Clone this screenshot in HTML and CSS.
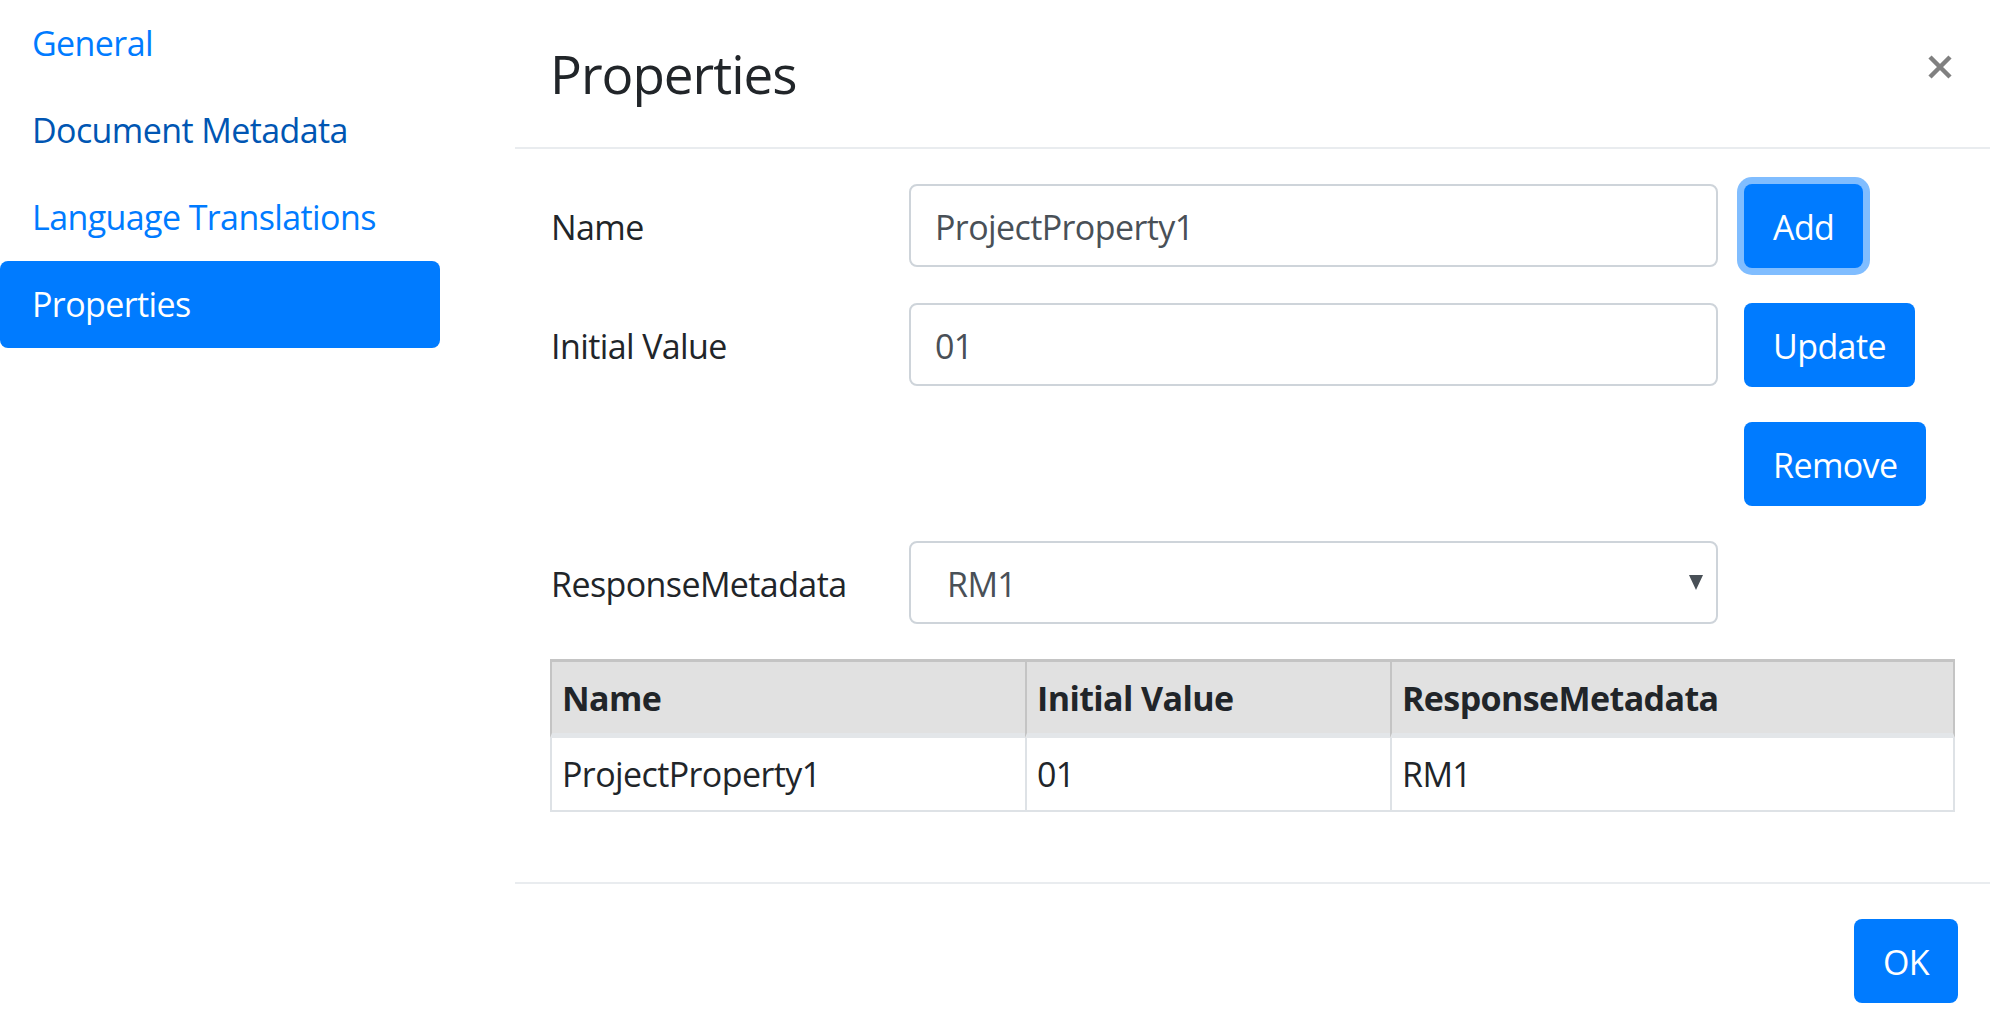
FILE: index.html
```html
<!DOCTYPE html>
<html lang="en">
<head>
    <meta charset="UTF-8">
    <meta name="viewport" content="width=device-width, initial-scale=1.0">
    <title>Properties</title>
    <link rel="stylesheet" href="styles.css">
</head>
<body>
    <div class="page">
        <nav class="side-nav">
            <a class="nav-link" href="#">General</a>
            <a class="nav-link hovered" href="#">Document Metadata</a>
            <a class="nav-link" href="#">Language Translations</a>
            <a class="nav-link active" href="#">Properties</a>
        </nav>

        <div class="dialog">
            <div class="dialog-header">
                <h4 class="dialog-title">Properties</h4>
                <button class="close" type="button" aria-label="Close">
                    <svg width="24" height="24" viewBox="0 0 24 24">
                        <path d="M2 2 L22 22 M22 2 L2 22" stroke="#808080" stroke-width="4.5" fill="none"/>
                    </svg>
                </button>
            </div>

            <div class="dialog-body">
                <div class="form-grid">
                    <label class="form-label">Name</label>
                    <input class="form-control" type="text" value="ProjectProperty1">
                    <button class="btn btn-focus" type="button">Add</button>

                    <label class="form-label">Initial Value</label>
                    <input class="form-control" type="text" value="01">
                    <button class="btn" type="button">Update</button>

                    <span></span>
                    <span></span>
                    <button class="btn" type="button">Remove</button>

                    <label class="form-label">ResponseMetadata</label>
                    <div class="select-wrap">
                        <select class="form-select">
                            <option>RM1</option>
                        </select>
                    </div>
                    <span></span>
                </div>

                <table class="prop-table">
                    <thead>
                        <tr>
                            <th class="col-name">Name</th>
                            <th class="col-value">Initial Value</th>
                            <th class="col-meta">ResponseMetadata</th>
                        </tr>
                    </thead>
                    <tbody>
                        <tr>
                            <td>ProjectProperty1</td>
                            <td>01</td>
                            <td>RM1</td>
                        </tr>
                    </tbody>
                </table>
            </div>

            <div class="dialog-footer">
                <button class="btn" type="button">OK</button>
            </div>
        </div>
    </div>
</body>
</html>
```

FILE: styles.css
```css
* {
    box-sizing: border-box;
}
body {
    margin: 0;
    background: #fff;
    color: #212529;
    font-family: "Open Sans", "Noto Sans", sans-serif;
    font-size: 34px;
    letter-spacing: -0.6px;
}
.page {
    display: flex;
    align-items: flex-start;
}

/* left navigation */
.side-nav {
    width: 440px;
    flex-shrink: 0;
    display: flex;
    flex-direction: column;
}
.nav-link {
    display: block;
    padding: 16px 32px;
    line-height: 55px;
    color: #007bff;
    text-decoration: none;
    border-radius: 8px;
}
.nav-link.hovered {
    color: #0056b3;
}
.nav-link.active {
    background: #007bff;
    color: #fff;
}

/* dialog */
.dialog {
    flex: 1;
    margin-left: 75px;
}
.dialog-header {
    display: flex;
    justify-content: space-between;
    align-items: flex-start;
    padding: 34px 38px 33px 35px;
    border-bottom: 2px solid #e9ecef;
}
.dialog-title {
    margin: 0;
    font-size: 53px;
    font-weight: 500;
    line-height: 80px;
    letter-spacing: -1px;
}
.close {
    margin-top: 21px;
    padding: 0;
    border: none;
    background: none;
    width: 24px;
    height: 24px;
}
.close svg {
    display: block;
}
.dialog-body {
    padding: 35px 35px 70px 35px;
}
.form-grid {
    display: grid;
    grid-template-columns: 333px 809px auto;
    grid-auto-rows: 83px;
    column-gap: 26px;
    row-gap: 36px;
    align-items: center;
}
.form-label {
    line-height: 80px;
    padding-top: 3px;
    padding-left: 1px;
}
.form-control,
.form-select {
    width: 809px;
    height: 83px;
    border: 2px solid #ced4da;
    border-radius: 8px;
    padding: 3px 24px 0 24px;
    font-family: inherit;
    font-size: 34px;
    letter-spacing: inherit;
    color: #495057;
    background: #fff;
    outline: none;
}
.select-wrap {
    position: relative;
    width: 809px;
}
.form-select {
    display: block;
    appearance: none;
    -webkit-appearance: none;
    padding-left: 36px;
}
.select-wrap::after {
    content: "";
    position: absolute;
    right: 15px;
    top: 34px;
    border-left: 7.5px solid transparent;
    border-right: 7.5px solid transparent;
    border-top: 15px solid #495057;
}
.btn {
    justify-self: start;
    height: 84px;
    padding: 2px 29px 0 29px;
    border: none;
    border-radius: 8px;
    background: #007bff;
    color: #fff;
    font-family: inherit;
    font-size: 34px;
    letter-spacing: inherit;
    cursor: pointer;
}
.btn-focus {
    box-shadow: 0 0 0 7px #80bdff;
}

/* table */
.prop-table {
    width: 100%;
    margin-top: 35px;
    border-collapse: separate;
    border-spacing: 0;
    table-layout: fixed;
}
.prop-table th,
.prop-table td {
    text-align: left;
    padding: 0 10px;
}
.prop-table th {
    height: 79px;
    line-height: 69px;
    padding-top: 2px;
    font-weight: 700;
    background: #e1e1e1;
    border-top: 3px solid #c4c4c4;
    border-left: 2px solid #c4c4c4;
    border-bottom: 5px solid #e3e6e9;
}
.prop-table th:last-child {
    border-right: 2px solid #c4c4c4;
}
.prop-table td {
    height: 74px;
    line-height: 72px;
    border-left: 2px solid #dee2e6;
    border-bottom: 2px solid #dee2e6;
}
.prop-table td:last-child {
    border-right: 2px solid #dee2e6;
}
.col-name {
    width: 475px;
}
.col-value {
    width: 365px;
}

.dialog-footer {
    display: flex;
    justify-content: flex-end;
    padding: 35px 32px 20px 35px;
    border-top: 2px solid #e9ecef;
}
```
